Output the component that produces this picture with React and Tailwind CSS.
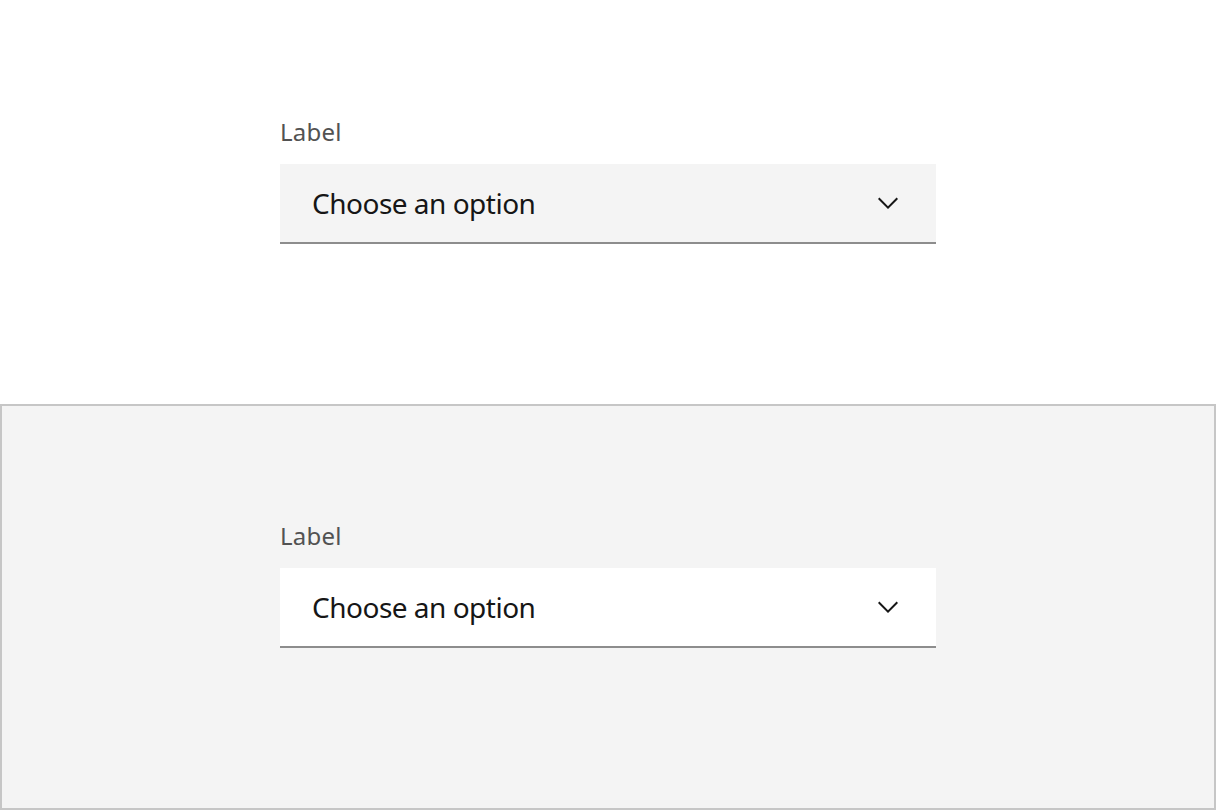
function Chevron() {
  return (
    <svg width="32" height="32" viewBox="0 0 16 16" fill="#161616" className="shrink-0">
      <path d="M8 11L3 6 3.7 5.3 8 9.6 12.3 5.3 13 6z" />
    </svg>
  );
}

function SelectField({ fieldBg }) {
  return (
    <div className="flex flex-col w-[656px]">
      <label className="text-[24px] leading-[32px] tracking-[0.2px] text-[#525252] mb-4">Label</label>
      <div className={`flex items-center justify-between h-[80px] pl-8 pr-8 border-b-2 border-[#8d8d8d] ${fieldBg}`}>
        <span className="text-[28px] leading-[40px] tracking-[-0.5px] text-[#161616]">Choose an option</span>
        <Chevron />
      </div>
    </div>
  );
}

export default function App() {
  return (
    <div className="w-[1216px] h-[810px] flex flex-col bg-white" style={{ fontFamily: '"Noto Sans", "Open Sans", sans-serif' }}>
      <div className="h-[404px] pt-[116px] pl-[280px]">
        <SelectField fieldBg="bg-[#f4f4f4]" />
      </div>
      <div className="h-[406px] pt-[114px] pl-[278px] bg-[#f4f4f4] border-2 border-[#c6c6c6]">
        <SelectField fieldBg="bg-white" />
      </div>
    </div>
  );
}
